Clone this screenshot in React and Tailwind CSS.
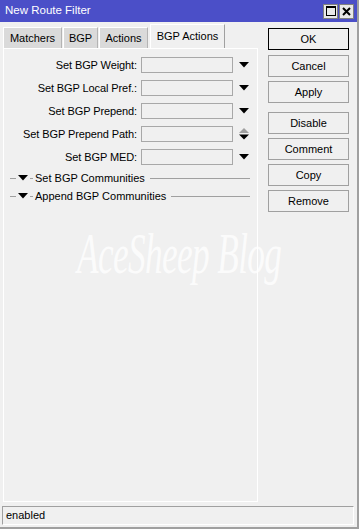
import React from 'react';

const FIELDS = [
  { label: 'Set BGP Weight:', kind: 'drop' },
  { label: 'Set BGP Local Pref.:', kind: 'drop' },
  { label: 'Set BGP Prepend:', kind: 'drop' },
  { label: 'Set BGP Prepend Path:', kind: 'spin' },
  { label: 'Set BGP MED:', kind: 'drop' },
];

const TABS = [
  { label: 'Matchers', w: 'w-[59px]' },
  { label: 'BGP', w: 'w-[35px]' },
  { label: 'Actions', w: 'w-[49px]' },
];

const BUTTONS = [
  { label: 'Cancel', gap: 'mt-[5px]' },
  { label: 'Apply', gap: 'mt-[4px]' },
  { label: 'Disable', gap: 'mt-[9px]' },
  { label: 'Comment', gap: 'mt-[4px]' },
  { label: 'Copy', gap: 'mt-[4px]' },
  { label: 'Remove', gap: 'mt-[4px]' },
];

function DownArrow() {
  return (
    <svg width="10" height="6" viewBox="0 0 10 6">
      <polygon points="0,0 10,0 5,5.5" fill="#000" />
    </svg>
  );
}

function SpinArrow() {
  return (
    <svg width="10" height="12" viewBox="0 0 10 12">
      <polygon points="0,5 5,0 10,5" fill="#a0a0a0" />
      <polygon points="0,6.5 10,6.5 5,11.5" fill="#000" />
    </svg>
  );
}

function FieldRow({ label, kind }) {
  return (
    <div className="flex items-center h-[16px]">
      <div className="w-[134px] text-right pr-[1px] leading-none tracking-[-0.1px]">{label}</div>
      <div className="ml-[3px] w-[92px] h-[16px] border border-[#a8a8a8] bg-[#f0f0f0]"></div>
      <div className="w-[21px] flex justify-center">
        {kind === 'spin' ? <SpinArrow /> : <DownArrow />}
      </div>
    </div>
  );
}

function Section({ label }) {
  return (
    <div className="flex items-center h-[18px] pl-[6px] pr-[7px]">
      <div className="w-[6px] h-px bg-[#a0a0a0]"></div>
      <div className="ml-[2px] flex items-center">
        <svg width="10" height="6" viewBox="0 0 10 6">
          <polygon points="0,0 10,0 5,5.5" fill="#000" />
        </svg>
      </div>
      <div className="ml-[2px] w-[3px] h-px bg-[#a0a0a0]"></div>
      <div className="ml-[2px] leading-none">{label}</div>
      <div className="ml-[5px] flex-1 h-px bg-[#a0a0a0]"></div>
    </div>
  );
}

export default function App() {
  return (
    <div
      className="relative w-[359px] h-[529px] bg-[#f0f0f0] flex flex-col border-r-2 border-b-2 border-[#a0a0a0] text-[11px] text-black overflow-hidden"
      style={{ fontFamily: '"Liberation Sans", Arial, sans-serif' }}
    >
      {/* Titelleiste */}
      <div className="h-[22px] bg-[#4b4fc8] flex items-center pl-[5px] pr-[3px] shrink-0">
        <span className="text-white leading-none text-[11.5px]">New Route Filter</span>
        <div className="ml-auto flex gap-[1px]">
          <div className="w-[15px] h-[15px] bg-[#e8e8e8] border border-[#808080] flex items-center justify-center">
            <div className="w-[10px] h-[10px] border-[1.5px] border-black border-t-2"></div>
          </div>
          <div className="w-[15px] h-[15px] bg-[#e8e8e8] border border-[#808080] flex items-center justify-center">
            <svg width="9" height="9" viewBox="0 0 9 9">
              <path d="M1 1 L8 8 M8 1 L1 8" stroke="#000" strokeWidth="2" />
            </svg>
          </div>
        </div>
      </div>

      <div className="flex flex-1 min-h-0">
        {/* linke Spalte: Tabs + Panel */}
        <div className="w-[258px] pl-[3px] pt-[2px] pb-[1px] flex flex-col">
          <div className="flex items-end h-[24px]">
            {TABS.map(t => (
              <div
                key={t.label}
                className={`${t.w} h-[21px] mr-[1px] bg-[#dadada] border-t border-l border-white border-r border-r-[#b4b4b4] flex items-center justify-center leading-none`}
              >
                {t.label}
              </div>
            ))}
            <div className="w-[75px] h-[24px] ml-[1px] bg-[#f0f0f0] border-t border-l border-white border-r border-r-[#a0a0a0] flex items-start justify-center pt-[6px] leading-none relative z-10">
              BGP Actions
            </div>
          </div>
          <div className="flex-1 border-t border-l border-white border-r border-b border-[#a0a0a0] border-t-white border-l-white pt-[8px] flex flex-col">
            <div className="flex flex-col gap-[7px]">
              {FIELDS.map(f => (
                <FieldRow key={f.label} label={f.label} kind={f.kind} />
              ))}
            </div>
            <div className="mt-[4px] flex flex-col">
              <Section label="Set BGP Communities" />
              <Section label="Append BGP Communities" />
            </div>
          </div>
        </div>

        {/* Buttons rechts */}
        <div className="ml-[10px] pt-[6px] flex flex-col w-[81px]">
          <div className="h-[22px] border border-black bg-[#f0f0f0] flex items-center justify-center leading-none">OK</div>
          {BUTTONS.map(b => (
            <div
              key={b.label}
              className={`${b.gap} h-[22px] border border-[#a0a0a0] bg-[#f0f0f0] flex items-center justify-center leading-none`}
            >
              {b.label}
            </div>
          ))}
        </div>
      </div>

      {/* Statusleiste */}
      <div className="mx-[2px] mr-[3px] mt-[3px] mb-[2px] h-[19px] border-t border-l border-[#a0a0a0] border-r border-b border-r-white border-b-white flex items-center pl-[3px] leading-none shrink-0">
        enabled
      </div>

      {/* Wasserzeichen */}
      <div
        className="absolute left-[77px] top-[226px] text-[56px] italic text-white opacity-75 pointer-events-none leading-none whitespace-nowrap tracking-[-1px] scale-x-[0.63] origin-left"
        style={{ fontFamily: '"Liberation Serif", serif' }}
      >
        AceSheep Blog
      </div>
    </div>
  );
}
